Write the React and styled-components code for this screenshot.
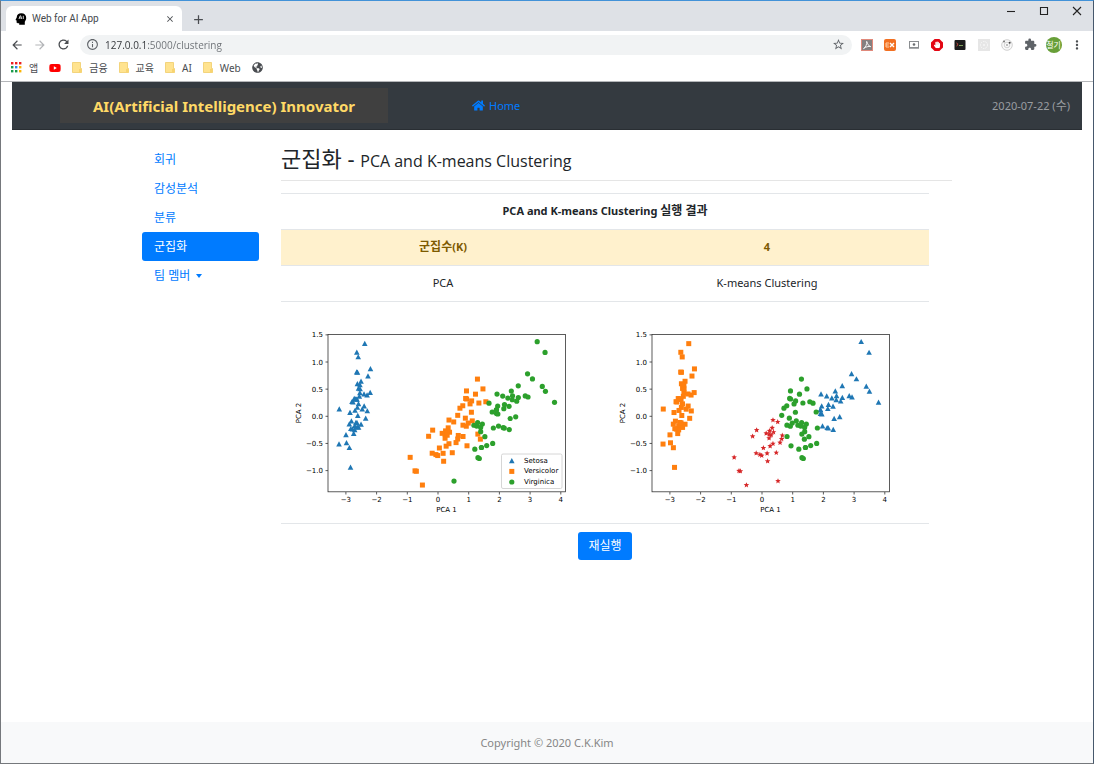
import React from "react";
import styled, { createGlobalStyle, css } from "styled-components";
import { FaHome, FaYoutube, FaGlobeAmericas, FaHandPaper } from "react-icons/fa";
import {
  MdArrowBack,
  MdArrowForward,
  MdRefresh,
  MdInfoOutline,
  MdStarBorder,
  MdExtension,
  MdMoreVert,
  MdClose,
  MdAdd,
} from "react-icons/md";

const GlobalStyle = createGlobalStyle`
  *, *::before, *::after { box-sizing: border-box; }
  body {
    margin: 0;
    background: #fff;
    color: #212529;
    font-family: "Noto Sans", "Noto Sans CJK KR", sans-serif;
    font-size: 11px;
    line-height: 18px;
  }
  button, input { font: inherit; color: inherit; }
  a { color: inherit; text-decoration: none; }
`;

/* ---------- browser window ---------- */

const Window = styled.div`
  min-height: 100vh;
  display: flex;
  flex-direction: column;
  border: 1px solid #75787c;
  border-top-color: #4292d8;
  border-right-color: #46586c;
`;

const TabStrip = styled.div`
  height: 30px;
  display: flex;
  align-items: flex-end;
  background: #dee1e6;
  padding-left: 5px;
`;

const Tab = styled.div`
  width: 176px;
  height: 25px;
  display: flex;
  align-items: center;
  gap: 5px;
  padding: 0 7px 0 9px;
  border-radius: 6px 6px 0 0;
  background: #fff;
  color: #45494d;
  font-family: Roboto, sans-serif;
  font-size: 10px;
`;

const TabTitle = styled.span`
  flex: 1;
`;

const IconButton = styled.button`
  display: inline-flex;
  align-items: center;
  justify-content: center;
  width: ${(p) => p.$width || 16}px;
  height: ${(p) => p.$height || 16}px;
  padding: 0;
  border: 0;
  background: none;
  color: ${(p) => p.$color || "#4a4d51"};
  flex: none;
`;

const NewTab = styled(IconButton)`
  margin: 0 0 4px 8px;
`;

const WindowControls = styled.div`
  display: flex;
  align-self: flex-start;
  margin-left: auto;
`;

const Toolbar = styled.div`
  height: 27px;
  display: flex;
  align-items: center;
  padding: 0 8px;
  gap: 7px;
`;

const Omnibox = styled.label`
  flex: 1;
  height: 20px;
  display: flex;
  align-items: center;
  gap: 6px;
  margin-left: 2px;
  padding: 0 7px 0 6px;
  border-radius: 10px;
  background: #f1f3f4;
  color: #5f6368;
`;

const Address = styled.input`
  flex: 1;
  min-width: 0;
  padding: 0;
  border: 0;
  outline: 0;
  font-family: "Open Sans", sans-serif;
  font-size: 10px;
  color: transparent;
  background: linear-gradient(90deg, #303337 41px, #6b6f74 41px);
  background-clip: text;
`;

const Extensions = styled.div`
  flex: 0 0 226px;
  display: flex;
  align-items: center;
  justify-content: space-between;
`;

const Avatar = styled.button`
  width: 16px;
  height: 16px;
  padding: 0;
  border: 0;
  border-radius: 50%;
  background: #689f38;
  color: #fff;
  font-size: 8px;
  line-height: 16px;
`;

const BookmarkBar = styled.nav`
  height: 24px;
  display: flex;
  align-items: center;
  gap: 11px;
  padding: 0 10px 4px;
  border-bottom: 1px solid #b4b6b9;
  color: #4a4d51;
  font-size: 10px;
`;

const Bookmark = styled.a`
  display: inline-flex;
  align-items: center;
  gap: 7px;
`;

/* ---------- web page ---------- */

const Page = styled.div`
  flex: 1;
  display: flex;
  flex-direction: column;
`;

const Navbar = styled.header`
  height: 48px;
  display: grid;
  grid-template-columns: 328px 1fr auto;
  align-items: center;
  margin: 0 11px;
  padding: 0 12px 0 48px;
  background: #343a40;
  border-bottom: 1px solid #292e33;
`;

const Brand = styled.a`
  height: 35px;
  display: flex;
  align-items: center;
  justify-content: center;
  background: #404040;
  color: #ffd966;
  font-size: 15px;
  font-weight: 700;
`;

const HomeLink = styled.a`
  display: flex;
  align-items: center;
  justify-self: start;
  gap: 4px;
  margin-left: 84px;
  color: #007bff;
`;

const Today = styled.time`
  color: #9a9da0;
`;

const Hangul = styled.span`
  font-size: 12px;
`;

const Container = styled.div`
  flex: 1;
  width: 100%;
  max-width: 810px;
  margin: 0 auto;
  padding: 15px 0;
  display: flex;
  gap: 22px;
`;

const SideNav = styled.nav`
  width: 117px;
  flex: none;
  display: flex;
  flex-direction: column;
  font-size: 12px;
`;

const sideItem = css`
  height: 29px;
  display: flex;
  align-items: center;
  padding: 0 12px;
  border: 0;
  border-radius: 3px;
  background: ${(p) => (p.$active ? "#007bff" : "transparent")};
  color: ${(p) => (p.$active ? "#fff" : "#007bff")};
`;

const SideLink = styled.a`
  ${sideItem}
`;

const SideToggle = styled.button`
  ${sideItem}
  gap: 6px;
`;

const Caret = styled.span`
  border: 3px solid transparent;
  border-top: 4px solid #007bff;
  border-bottom: 0;
`;

const Main = styled.main`
  flex: 1;
  min-width: 0;
`;

const Title = styled.h1`
  margin: 0;
  padding-bottom: 9px;
  border-bottom: 1px solid #e5e5e5;
  font-size: 22px;
  line-height: 26px;
  font-weight: 400;
`;

const Subtitle = styled.small`
  font-family: "Open Sans", sans-serif;
  font-size: 16px;
  line-height: 1;
`;

const ResultTable = styled.table`
  width: calc(100% - 23px);
  margin-top: 12px;
  border-collapse: collapse;
  table-layout: fixed;
  text-align: center;
`;

const Row = styled.tr`
  border-top: 1px solid #e3e6e9;
  background: ${(p) => (p.$highlight ? "#fff1cd" : "transparent")};
  color: ${(p) => (p.$highlight ? "#7d5a00" : "inherit")};
`;

const cell = css`
  padding: 8px 9px 9px;
`;

const HeadCell = styled.th`
  ${cell}
  font-weight: 700;
`;

const Cell = styled.td`
  ${cell}
`;

const RunButton = styled.button`
  height: 28px;
  padding: 0 10px;
  border: 0;
  border-radius: 3px;
  background: #007bff;
  color: #fff;
  font-size: 12px;
`;

const Footer = styled.footer`
  height: 41px;
  display: flex;
  align-items: center;
  justify-content: center;
  background: #f8f9fa;
  color: #868686;
`;

const Chart = styled.svg`
  display: block;
  width: 100%;
  height: auto;
  font-family: "DejaVu Sans", sans-serif;
  font-size: 7px;
`;

/* ---------- iris measurements: 4 × 2 digits per flower, in millimetres ---------- */

const IRIS = {
  setosa:
    "51351402 49301402 47321302 46311502 50361402 54391704 46341403 50341502 44291402 49311501 54371502 48341602 48301401 43301101 58401202 57441504 54391304 51351403 57381703 51381503 54341702 51371504 46361002 51331705 48341902 50301602 50341604 52351502 52341402 47321602 48311602 54341504 52411501 55421402 49311502 50321202 55351302 49361401 44301302 51341502 50351303 45231303 44321302 50351606 51381904 48301403 51381602 46321402 53371502 50331402",
  versicolor:
    "70324714 64324515 69314915 55234013 65284615 57284513 63334716 49243310 66294613 52273914 50203510 59304215 60224010 61294714 56293613 67314414 56304515 58274110 62224515 56253911 59324818 61284013 63254915 61284712 64294313 66304414 68284814 67305017 60294515 57263510 55243811 55243710 58273912 60275116 54304515 60344516 67314715 63234413 56304113 55254013 55264412 61304614 58264012 50233310 56274213 57304212 57294213 62294313 51253011 57284113",
  virginica:
    "63336025 58275119 71305921 63295618 65305822 76306621 49254517 73296318 67255818 72366125 65325120 64275319 68305521 57255020 58285124 64325323 65305518 77386722 77266923 60225015 69325723 56284920 77286720 63274918 67335721 72326018 62284818 61304918 64285621 72305816 74286119 79386420 64285622 63285115 61265614 77306123 63345624 64315518 60304818 69315421 67315624 69315123 58275119 68325923 67335725 67305223 63255019 65305220 62345423 59305118",
};

const parse = (text) =>
  text.split(" ").map((s) => [0, 2, 4, 6].map((i) => Number(s.slice(i, i + 2)) / 10));

const MEAN = [5.8433, 3.0573, 3.758, 1.1993];
const AXES = [
  [0.36139, -0.08452, 0.85667, 0.35829],
  [0.65659, 0.73016, -0.17337, -0.07548],
];
const CENTROIDS = [
  [6.9125, 3.1, 5.8469, 2.1313],
  [5.006, 3.428, 1.462, 0.246],
  [6.2525, 2.855, 4.815, 1.625],
  [5.5321, 2.6357, 3.9607, 1.2286],
];

const project = (v) =>
  AXES.map((axis) => axis.reduce((sum, w, i) => sum + w * (v[i] - MEAN[i]), 0));

const nearest = (v) => {
  const d = CENTROIDS.map((c) => c.reduce((sum, x, i) => sum + (x - v[i]) ** 2, 0));
  return d.indexOf(Math.min(...d));
};

const flowers = [parse(IRIS.setosa), parse(IRIS.versicolor), parse(IRIS.virginica)];
const bySpecies = flowers.map((list) => list.map(project));
const all = flowers.flat();
const byCluster = CENTROIDS.map((_, k) => all.filter((v) => nearest(v) === k).map(project));

const STAR = Array.from({ length: 10 }, (_, i) => {
  const r = i % 2 ? 1.3 : 2.9;
  const a = (Math.PI * i) / 5;
  return `${(r * Math.sin(a)).toFixed(2)},${(-r * Math.cos(a)).toFixed(2)}`;
}).join(" ");

function Marker({ kind, x, y }) {
  if (kind === 0) return <path d={`M${x} ${y - 2.8}l2.8 5.2h-5.6z`} fill="#1f77b4" />;
  if (kind === 1) return <rect x={x - 2.5} y={y - 2.5} width="5" height="5" fill="#ff7f0e" />;
  if (kind === 2) return <circle cx={x} cy={y} r="2.6" fill="#2ca02c" />;
  return <polygon points={STAR} transform={`translate(${x} ${y})`} fill="#d62728" />;
}

const px = (v) => 148 + v * 30.7;
const py = (v) => 106.3 - v * 54.3;
const label = (v, digits) => `${v < 0 ? "−" : ""}${Math.abs(v).toFixed(digits)}`;

function Scatter({ groups, legend, title }) {
  return (
    <Chart viewBox="0 0 306 204" role="img" aria-label={title}>
      {groups.map((points, kind) =>
        points.map(([a, b], i) => <Marker key={`${kind}-${i}`} kind={kind} x={px(a)} y={py(b)} />)
      )}
      <rect x="38" y="24.5" width="237.5" height="157.3" fill="none" stroke="#333" strokeWidth=".8" />
      {[-3, -2, -1, 0, 1, 2, 3, 4].map((v) => (
        <g key={v}>
          <path d={`M${px(v)} 182v2.5`} stroke="#333" strokeWidth=".8" />
          <text x={px(v)} y="192.2" textAnchor="middle">{label(v, 0)}</text>
        </g>
      ))}
      {[-1, -0.5, 0, 0.5, 1, 1.5].map((v) => (
        <g key={v}>
          <path d={`M38 ${py(v)}h-2.5`} stroke="#333" strokeWidth=".8" />
          <text x="33" y={py(v) + 2.6} textAnchor="end">{label(v, 1)}</text>
        </g>
      ))}
      <text x="156.5" y="202" textAnchor="middle">PCA 1</text>
      <text transform="translate(10.5 103) rotate(-90)" textAnchor="middle">PCA 2</text>
      {legend && (
        <g>
          <rect x="211.5" y="144" width="60.5" height="34.5" rx="1.5" fill="#fff" fillOpacity=".8" stroke="#ccc" strokeWidth=".8" />
          {legend.map((name, i) => (
            <g key={name}>
              <Marker kind={i} x={221.8} y={150.8 + i * 10.6} />
              <text x="234" y={152.8 + i * 10.6}>{name}</text>
            </g>
          ))}
        </g>
      )}
    </Chart>
  );
}

/* ---------- small drawings ---------- */

const Favicon = () => (
  <svg width="12" height="12" viewBox="0 0 12 12" aria-hidden="true">
    <path d="M6.2.3C9.4.3 11.2 2.2 11.2 5c0 1.700-.8 2.700-1.400 3.700V11.800H4.200V10.200H2.800c-.8 0-1.200-.4-1.200-1.200V7.500L.5 7.100 1.700 4.400C1.900 1.800 3.600.3 6.200.3z" fill="#000" />
    <path d="M4 6l1.100-3.200h.6L6.800 6M4.500 5h1.900M8.300 2.800V6" fill="none" stroke="#fff" strokeWidth=".8" />
  </svg>
);

const GRID_COLORS = [
  "#ea2020", "#ea2020", "#ea2020",
  "#1a9a4a", "#2f80ed", "#fbb405",
  "#1a9a4a", "#1a9a4a", "#fbb405",
];

const AppsIcon = () => (
  <svg width="11" height="11" viewBox="0 0 11 11" aria-hidden="true">
    {GRID_COLORS.map((c, i) => (
      <rect key={i} x={(i % 3) * 4} y={Math.floor(i / 3) * 4} width="2.400" height="2.400" fill={c} />
    ))}
  </svg>
);

const FolderIcon = () => (
  <svg width="10" height="11" viewBox="0 0 10 11" aria-hidden="true">
    <path d="M.5.500h8v6h1v4h-9z" fill="#ffe38f" stroke="#f0cd68" strokeWidth=".8" />
    <path d="M7 10.500V7h2.500v3.500z" fill="#f8d470" />
  </svg>
);

const AcrobatIcon = () => (
  <svg width="12" height="12" viewBox="0 0 12 12" aria-hidden="true">
    <rect x=".5" y=".5" width="11" height="11" fill="#858080" stroke="#e0897b" />
    <path d="M2.500 9.600C4.500 8.500 6.200 5 5.700 2.400c1 3 2.200 4.800 4 5.200-2-.5-5 .2-7.200 2z" fill="none" stroke="#fff" strokeWidth=".9" />
  </svg>
);

const ExIcon = () => (
  <svg width="12" height="12" viewBox="0 0 12 12" aria-hidden="true">
    <rect width="12" height="12" rx="2" fill="#f27022" />
    <path d="M5 4H2v4h3M2 6h2.700" fill="none" stroke="#ffd0a8" />
    <path d="M6 4l4 4M10 4L6 8" stroke="#fff" strokeWidth="1.400" />
  </svg>
);

const CastIcon = () => (
  <svg width="12" height="12" viewBox="0 0 12 12" aria-hidden="true">
    <rect x="1.500" y="2.500" width="9" height="6" fill="#fff" stroke="#8b8e91" />
    <circle cx="6" cy="5.500" r="1.300" fill="#6a6d70" />
    <path d="M1 9.500h10" stroke="#a9abad" />
  </svg>
);

const BlockerIcon = () => (
  <svg width="12" height="12" viewBox="0 0 12 12" aria-hidden="true">
    <path d="M3.600 0h4.800L12 3.600v4.800L8.400 12H3.600L0 8.400V3.600z" fill="#e30613" />
    <FaHandPaper x="2.500" y="2.300" width="7" height="7" size={7} color="#fff" />
  </svg>
);

const TerminalIcon = () => (
  <svg width="12" height="12" viewBox="0 0 12 12" aria-hidden="true">
    <rect x=".5" y="1" width="11" height="10" rx="1" fill="#1b1b1b" />
    <path d="M2.500 4l1.600 1.500L2.500 7" fill="none" stroke="#d95040" />
    <path d="M5 6.500h4" stroke="#7fa05c" />
  </svg>
);

const FadedIcon = () => (
  <svg width="12" height="12" viewBox="0 0 12 12" aria-hidden="true">
    <rect width="12" height="12" fill="#e6e6e6" />
    <circle cx="6" cy="6" r="3.500" fill="none" stroke="#fafafa" strokeDasharray="1.500 1" />
    <circle cx="6" cy="6" r="1" fill="#f6f6f6" />
  </svg>
);

const OrbitIcon = () => (
  <svg width="12" height="12" viewBox="0 0 12 12" aria-hidden="true">
    <circle cx="6" cy="6" r="5.300" fill="#fafafa" stroke="#d0d0d0" />
    <circle cx="6" cy="6" r="2.800" fill="none" stroke="#c2c2c2" strokeWidth=".7" />
    <circle cx="6" cy="6" r="1" fill="#aaa" />
    <circle cx="3" cy="2.500" r="1" fill="#777" />
    <circle cx="8.700" cy="3.700" r="1" fill="#444" />
  </svg>
);

const ControlIcon = ({ d }) => (
  <svg width="10" height="10" viewBox="0 0 10 10" aria-hidden="true">
    <path d={d} fill="none" stroke="#222" strokeWidth="1.100" />
  </svg>
);

const EXTENSIONS = [
  ["PDF", AcrobatIcon],
  ["EX", ExIcon],
  ["Cast", CastIcon],
  ["Blocker", BlockerIcon],
  ["Terminal", TerminalIcon],
  ["Capture", FadedIcon],
  ["Orbit", OrbitIcon],
];

const FOLDERS = ["금융", "교육", "AI", "Web"];
const MENU = ["회귀", "감성분석", "분류", "군집화"];

export default function App() {
  return (
    <Window>
      <GlobalStyle />
      <TabStrip>
        <Tab>
          <Favicon />
          <TabTitle>Web for AI App</TabTitle>
          <IconButton aria-label="Close tab" $width={10}><MdClose size={10} /></IconButton>
        </Tab>
        <NewTab aria-label="New tab"><MdAdd size={15} /></NewTab>
        <WindowControls>
          <IconButton aria-label="Minimize" $width={33} $height={20}><ControlIcon d="M1 5.500h8" /></IconButton>
          <IconButton aria-label="Maximize" $width={33} $height={20}><ControlIcon d="M1.500 1.500h7v7h-7z" /></IconButton>
          <IconButton aria-label="Close" $width={33} $height={20}><ControlIcon d="M1 1l8 8M9 1L1 9" /></IconButton>
        </WindowControls>
      </TabStrip>
      <Toolbar>
        <IconButton aria-label="Back"><MdArrowBack size={14} /></IconButton>
        <IconButton aria-label="Forward" $color="#b3b5b8"><MdArrowForward size={14} /></IconButton>
        <IconButton aria-label="Reload"><MdRefresh size={15} /></IconButton>
        <Omnibox>
          <MdInfoOutline size={13} />
          <Address aria-label="Address" defaultValue="127.0.0.1:5000/clustering" />
          <MdStarBorder size={13} />
        </Omnibox>
        <Extensions>
          {EXTENSIONS.map(([name, Icon]) => (
            <IconButton key={name} aria-label={name}><Icon /></IconButton>
          ))}
          <IconButton aria-label="Extensions" $color="#5f6368"><MdExtension size={13} /></IconButton>
          <Avatar>철기</Avatar>
          <IconButton aria-label="Menu"><MdMoreVert size={14} /></IconButton>
        </Extensions>
      </Toolbar>
      <BookmarkBar>
        <Bookmark href="#apps"><AppsIcon />앱</Bookmark>
        <Bookmark href="#youtube" aria-label="YouTube"><FaYoutube size={12} color="#f00" /></Bookmark>
        {FOLDERS.map((name) => (
          <Bookmark key={name} href="#folder"><FolderIcon />{name}</Bookmark>
        ))}
        <Bookmark href="#globe" aria-label="Globe"><FaGlobeAmericas size={11} /></Bookmark>
      </BookmarkBar>

      <Page>
        <Navbar>
          <Brand href="#top">AI(Artificial Intelligence) Innovator</Brand>
          <HomeLink href="#home"><FaHome size={13} />Home</HomeLink>
          <Today dateTime="2020-07-22">2020-07-22 (<Hangul>수</Hangul>)</Today>
        </Navbar>
        <Container>
          <SideNav>
            {MENU.map((name) => (
              <SideLink key={name} href="#menu" $active={name === "군집화"}>{name}</SideLink>
            ))}
            <SideToggle>팀 멤버<Caret /></SideToggle>
          </SideNav>
          <Main>
            <Title>군집화 - <Subtitle>PCA and K-means Clustering</Subtitle></Title>
            <ResultTable>
              <thead>
                <Row><HeadCell colSpan={2}>PCA and K-means Clustering <Hangul>실행 결과</Hangul></HeadCell></Row>
              </thead>
              <tbody>
                <Row $highlight>
                  <HeadCell><Hangul>군집수</Hangul>(K)</HeadCell>
                  <HeadCell>4</HeadCell>
                </Row>
                <Row>
                  <Cell>PCA</Cell>
                  <Cell>K-means Clustering</Cell>
                </Row>
                <Row>
                  <Cell>
                    <Scatter title="PCA" groups={bySpecies} legend={["Setosa", "Versicolor", "Virginica"]} />
                  </Cell>
                  <Cell>
                    <Scatter title="K-means Clustering" groups={byCluster} />
                  </Cell>
                </Row>
                <Row>
                  <Cell colSpan={2}><RunButton>재실행</RunButton></Cell>
                </Row>
              </tbody>
            </ResultTable>
          </Main>
        </Container>
        <Footer>Copyright © 2020 C.K.Kim</Footer>
      </Page>
    </Window>
  );
}
